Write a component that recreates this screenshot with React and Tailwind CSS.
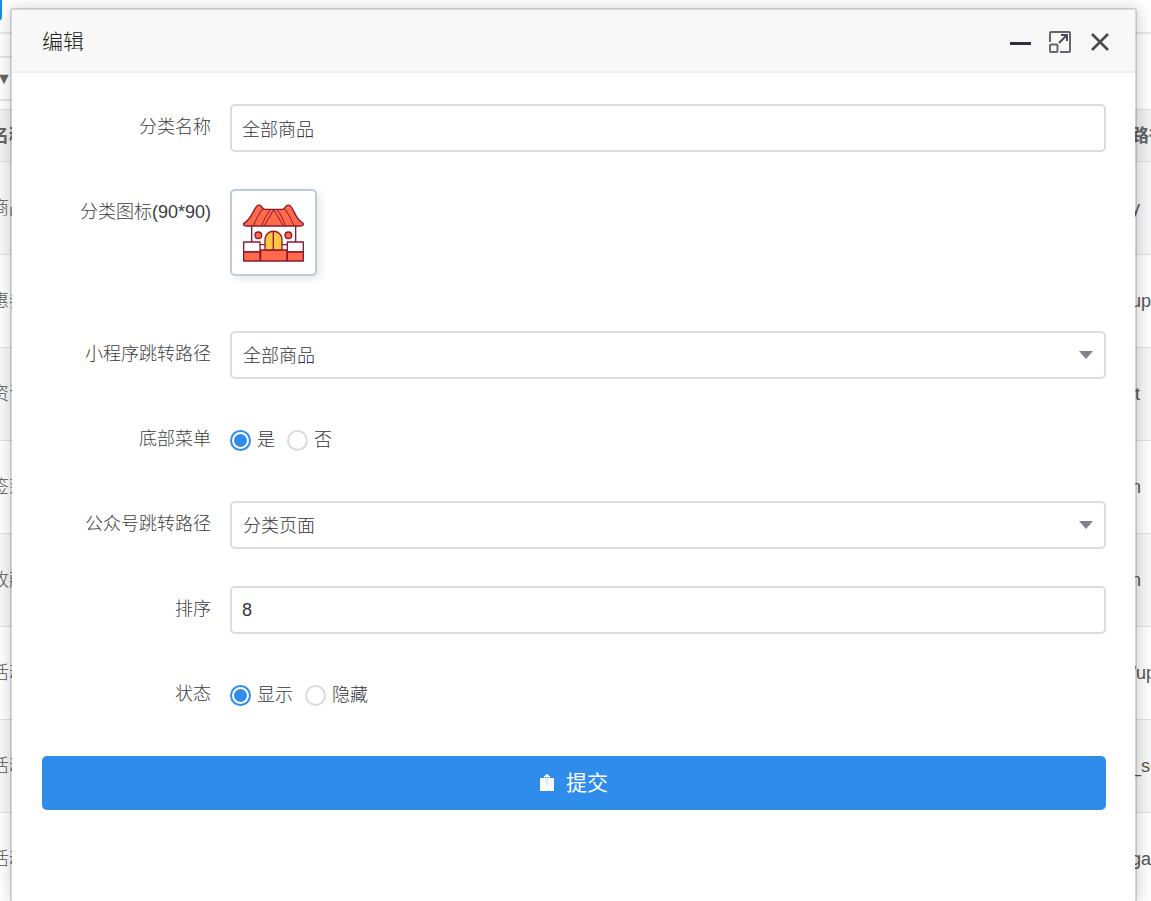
import React, { useState } from "react";

const rows = [
  { name: "商品", path: "y" },
  { name: "惠券", path: "up" },
  { name: "资讯", path: "it" },
  { name: "签到", path: "n" },
  { name: "收藏", path: "n" },
  { name: "活动", path: "/up" },
  { name: "活动", path: "_sec" },
  { name: "活动", path: "gain" },
];

const inputClass =
  "h-12 w-full rounded-[5px] border-2 border-[#dcdce0] bg-white text-lg font-light text-[#33333b] outline-none focus:border-[#2f8ceb]";

function ListPage() {
  return (
    <div className="absolute inset-0 overflow-hidden bg-white">
      <div className="flex h-[34px] items-start border-b-2 border-[#e6e9ed]">
        <div className="-ml-1 h-[21px] w-1.5 rounded-br-sm bg-[#1490dc]" />
      </div>
      <div className="mt-[22px] -ml-2 flex h-[45px] w-16 items-center border-y-2 border-[#e6e6e6]">
        <span className="ml-1 text-base leading-none text-[#666666]">▼</span>
      </div>
      <table className="mt-2 -ml-[9px] w-[calc(100%+9px)] table-fixed border-collapse text-left whitespace-nowrap">
        <thead>
          <tr className="h-[52px] border-y border-[#e2e2e2] bg-[#f2f2f2] text-lg text-[#666666]">
            <th className="font-bold">名称</th>
            <th className="w-5 overflow-hidden font-bold">路径</th>
          </tr>
        </thead>
        <tbody>
          {rows.map((row, i) => (
            <tr
              key={i}
              className="h-[93px] border-b border-[#e2e2e2] text-lg font-light text-[#555555] odd:bg-[#f8f8f8]"
            >
              <td>{row.name}</td>
              <td className="overflow-hidden font-normal">{row.path}</td>
            </tr>
          ))}
        </tbody>
      </table>
    </div>
  );
}

function Field({ label, htmlFor, className = "h-12", children }) {
  return (
    <div className={`flex ${className}`}>
      <label
        htmlFor={htmlFor}
        className="w-[169px] shrink-0 pt-2.5 text-right text-lg leading-[27px] font-light text-[#3c3c40]"
      >
        {label}
      </label>
      <div className="ml-[19px] min-w-0 flex-1">{children}</div>
    </div>
  );
}

function SelectBox({ id, value, onChange, options }) {
  return (
    <div className="relative">
      <select
        id={id}
        value={value}
        onChange={(e) => onChange(e.target.value)}
        className={`${inputClass} appearance-none px-[11px] pt-0.5`}
      >
        {options.map((option) => (
          <option key={option}>{option}</option>
        ))}
      </select>
      <svg
        className="pointer-events-none absolute top-5 right-[13px] h-2 w-3.5"
        viewBox="0 0 14 8"
        fill="#7f8190"
      >
        <path d="M0 0h14L7 8z" />
      </svg>
    </div>
  );
}

function RadioGroup({ name, label, value, onChange, options }) {
  return (
    <div role="radiogroup" aria-label={label} className="flex h-12 items-center gap-3">
      {options.map((option) => (
        <label
          key={option}
          className="flex items-center gap-1.5 text-lg font-light text-[#33333b]"
        >
          <input
            type="radio"
            name={name}
            checked={value === option}
            onChange={() => onChange(option)}
            className="h-[21px] w-[21px] appearance-none rounded-full border-2 border-[#dcdce0] bg-white bg-clip-content p-0.5 checked:border-[#2f8ceb] checked:bg-[#2f8ceb]"
          />
          {option}
        </label>
      ))}
    </div>
  );
}

function StoreIcon() {
  return (
    <svg
      className="h-[62px] w-[62px]"
      viewBox="68 64 186 186"
      stroke="#8f1730"
      strokeWidth="4"
      strokeLinejoin="round"
    >
      <path d="M94 132h132v60H94z" fill="#fff" />
      <path d="M121 208h79v33h-79z" fill="#ff6b4a" />
      <path d="M134 208v-30c0-35 51-35 51 0v30z" fill="#ffc844" />
      <path d="M159 152v56" fill="none" />
      <circle cx="114" cy="164" r="10" fill="#ff6b4a" />
      <circle cx="204" cy="164" r="10" fill="#ff6b4a" />
      <path d="M70 184h49v30H70zM201 184h48v30h-48z" fill="#fff" />
      <path d="M70 214h49v27H70zM201 214h48v27h-48z" fill="#ff6b4a" />
      <path
        d="M70 128c20-9 26-33 38-50 5-7 13-6 18 3 2 4 5 5 9 5h50c4 0 7-1 9-5 5-9 14-10 19-2 11 17 16 40 35 48 3 6-2 9-9 9H79c-7 0-12-3-9-8z"
        fill="#ff6b4a"
      />
      <path
        d="M127 84c-12 17-20 33-28 51M149 87c-10 15-18 31-25 48M160 87l-28 48M160 87l29 48M171 87c10 15 18 31 25 48M193 84c12 17 20 33 28 51"
        fill="none"
        strokeWidth="3"
      />
    </svg>
  );
}

export default function App() {
  const [name, setName] = useState("全部商品");
  const [miniPath, setMiniPath] = useState("全部商品");
  const [bottomMenu, setBottomMenu] = useState("是");
  const [officialPath, setOfficialPath] = useState("分类页面");
  const [sort, setSort] = useState("8");
  const [status, setStatus] = useState("显示");

  return (
    <div className="relative h-screen overflow-hidden font-['Liberation_Sans','Noto_Sans_CJK_SC',sans-serif]">
      <ListPage />

      <div
        role="dialog"
        aria-labelledby="dialog-title"
        className="absolute top-2 right-3.5 bottom-0 left-2.5 overflow-y-auto rounded-t-[3px] border-2 border-b-0 border-black/15 bg-white bg-clip-padding shadow-[1px_1px_16px_rgba(0,0,0,0.2)]"
      >
        {/* Header */}
        <header className="flex h-[63px] items-center justify-between border-b-2 border-[#eeeeee] bg-[#f8f8f8] pt-0.5 pr-6 pl-[30px]">
          <h2 id="dialog-title" className="text-[21px] font-light text-[#222222]">
            编辑
          </h2>
          <div className="flex items-center gap-[18px]">
            <button type="button" aria-label="最小化" className="flex h-6 w-[21px] items-center">
              <span className="mt-1 h-[3px] w-full bg-[#2d2f3c]" />
            </button>
            <button type="button" aria-label="最大化">
              <svg
                className="h-[22px] w-[22px]"
                viewBox="0 0 22 22"
                fill="none"
                stroke="#67656f"
                strokeWidth="2"
              >
                <path d="M1 11V2q0-1 1-1h18q1 0 1 1v18q0 1-1 1h-9" />
                <rect x="1" y="13.5" width="7.5" height="7.5" rx="1" />
                <path d="M10 12l7.5-7.5M12 4h6v6" stroke="#4c4a55" />
              </svg>
            </button>
            <button type="button" aria-label="关闭">
              <svg
                className="h-[22px] w-[22px]"
                viewBox="0 0 22 22"
                fill="none"
                stroke="#4a4953"
                strokeWidth="2.6"
              >
                <path d="M3 3l16 16M19 3L3 19" />
              </svg>
            </button>
          </div>
        </header>

        {/* Form */}
        <form
          className="flex flex-col gap-[37px] pt-[31px] pr-[29px] pb-8 pl-[30px]"
          onSubmit={(e) => e.preventDefault()}
        >
          <Field label="分类名称" htmlFor="name">
            <input
              id="name"
              type="text"
              value={name}
              onChange={(e) => setName(e.target.value)}
              className={`${inputClass} px-2.5`}
            />
          </Field>

          <Field label="分类图标(90*90)" htmlFor="icon" className="h-[105px]">
            <button
              id="icon"
              type="button"
              className="flex h-[87px] w-[87px] items-center justify-center rounded-[5px] border-2 border-[#bfcbd9] bg-white shadow-[3px_3px_8px_rgba(0,0,0,0.1)]"
            >
              <StoreIcon />
            </button>
          </Field>

          <Field label="小程序跳转路径" htmlFor="mini-path">
            <SelectBox
              id="mini-path"
              value={miniPath}
              onChange={setMiniPath}
              options={["全部商品", "分类页面"]}
            />
          </Field>

          <Field label="底部菜单">
            <RadioGroup
              name="bottomMenu"
              label="底部菜单"
              value={bottomMenu}
              onChange={setBottomMenu}
              options={["是", "否"]}
            />
          </Field>

          <Field label="公众号跳转路径" htmlFor="official-path">
            <SelectBox
              id="official-path"
              value={officialPath}
              onChange={setOfficialPath}
              options={["全部商品", "分类页面"]}
            />
          </Field>

          <Field label="排序" htmlFor="sort">
            <input
              id="sort"
              type="text"
              value={sort}
              onChange={(e) => setSort(e.target.value)}
              className={`${inputClass} px-2.5`}
            />
          </Field>

          <Field label="状态">
            <RadioGroup
              name="status"
              label="状态"
              value={status}
              onChange={setStatus}
              options={["显示", "隐藏"]}
            />
          </Field>

          <button
            type="submit"
            className="flex h-[54px] items-center justify-center gap-3 rounded-[5px] bg-[#2f8ceb] text-[21px] text-white"
          >
            <svg className="h-[18px] w-3.5" viewBox="0 0 14 18" fill="none">
              <path d="M0 4h14v13H0z" fill="#fff" />
              <path d="M4 3.5l3-3 3 3M7 .5v4" stroke="#fff" strokeWidth="1.2" />
              <path d="M7 4v7" stroke="#b9d8f8" strokeWidth="1.2" />
            </svg>
            提交
          </button>
        </form>
      </div>
    </div>
  );
}
